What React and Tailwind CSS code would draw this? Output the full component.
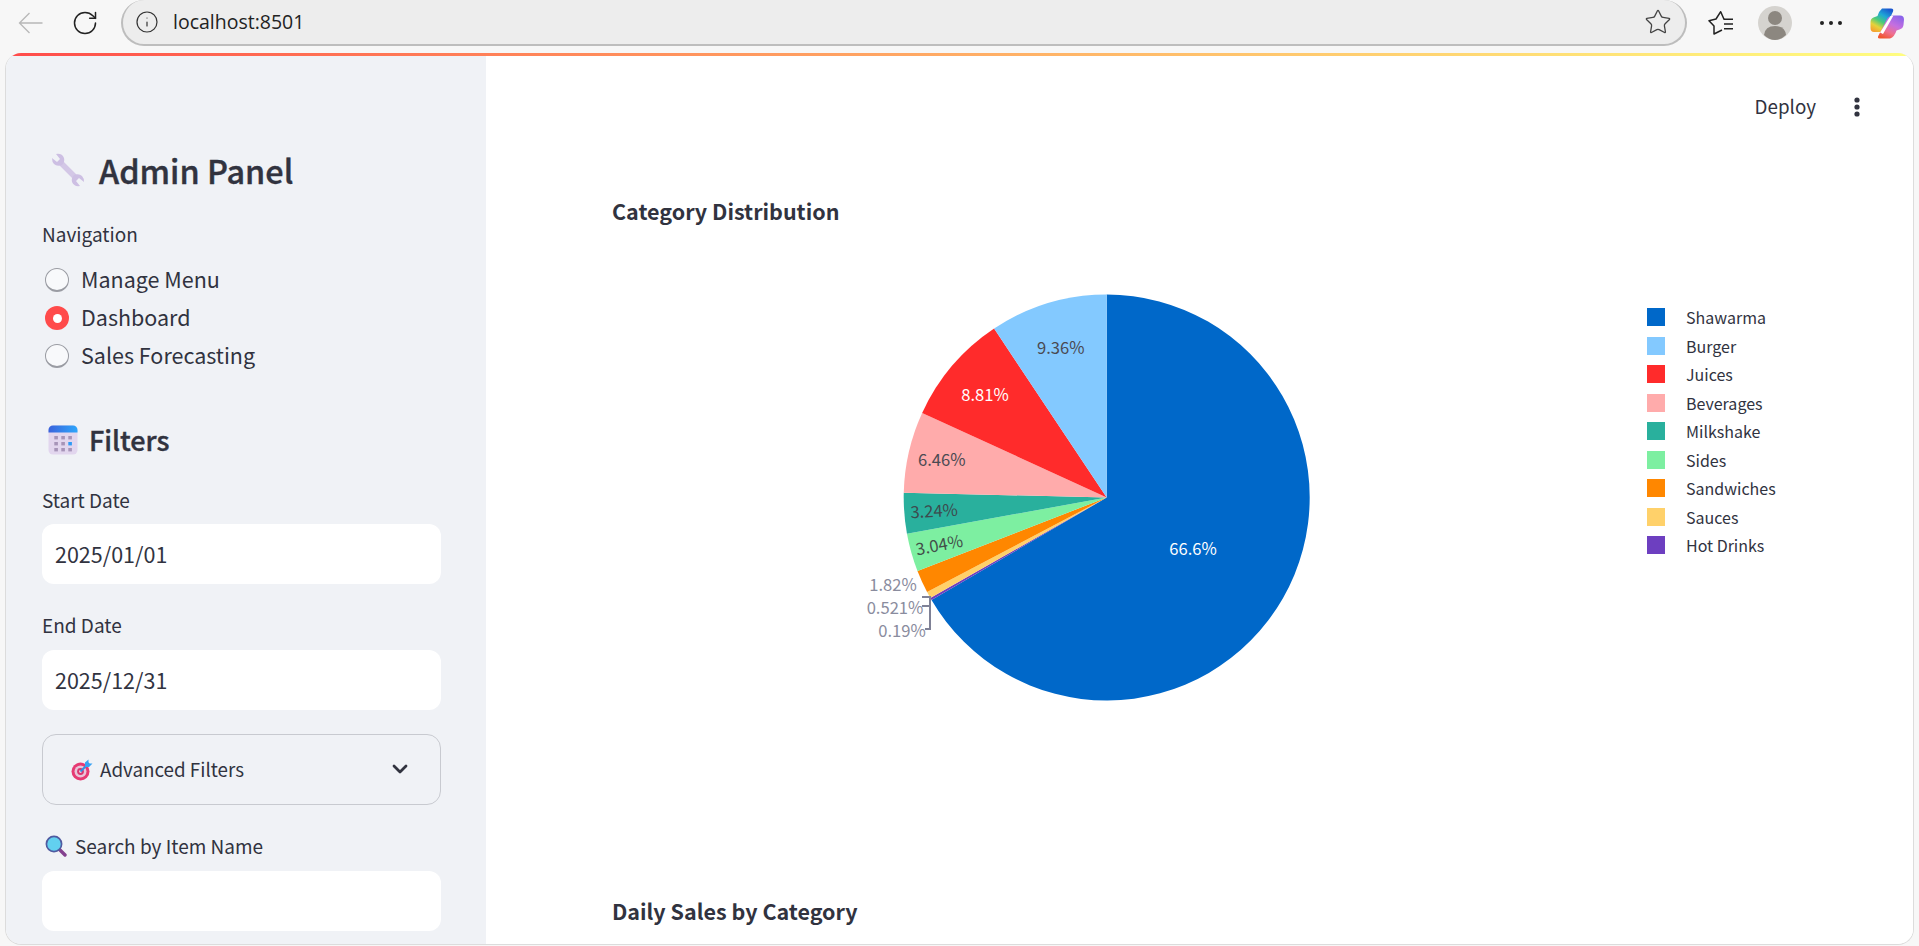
import React from "react";
import { RotateCw, Info, Star, ChevronDown } from "lucide-react";

const cx = 494.7, cy = 260.5, r = 203;
const slices = [
  [66.6, "#0068c9"], [0.19, "#6d3fc0"], [0.521, "#ffd16a"], [1.82, "#ff8700"], [3.04, "#7defa1"],
  [3.24, "#29b09d"], [6.46, "#ffabab"], [8.81, "#ff2b2b"], [9.36, "#83c9ff"],
];
const legend = [
  ["Shawarma", "#0068c9"], ["Burger", "#83c9ff"], ["Juices", "#ff2b2b"], ["Beverages", "#ffabab"], ["Milkshake", "#29b09d"],
  ["Sides", "#7defa1"], ["Sandwiches", "#ff8700"], ["Sauces", "#ffd16a"], ["Hot Drinks", "#6d3fc0"],
];
function slicePaths() {
  let a = 0;
  const total = slices.reduce((s, x) => s + x[0], 0);
  return slices.map(([v, c]) => {
    const a0 = a, a1 = a + (v / total) * Math.PI * 2;
    a = a1;
    const x0 = cx + r * Math.sin(a0), y0 = cy - r * Math.cos(a0);
    const x1 = cx + r * Math.sin(a1), y1 = cy - r * Math.cos(a1);
    return <path key={c} d={`M${cx} ${cy}L${x0} ${y0}A${r} ${r} 0 ${a1 - a0 > Math.PI ? 1 : 0} 1 ${x1} ${y1}Z`} fill={c} />;
  });
}
const ox = 612, oy = 237;
const labels = [
  ["66.6%", 1193, 548, "#ffffff", 0], ["9.36%", 1060.7, 347, "#4a4a52", 0], ["8.81%", 985, 394, "#ffffff", 0],
  ["6.46%", 941.7, 459, "#4a4a52", 0], ["3.24%", 934, 510, "#3d4a4e", -3], ["3.04%", 939, 544, "#43504a", -11],
  ["1.82%", 893, 584, "#8a8c9e", 0], ["0.521%", 895, 607, "#8a8c9e", 0], ["0.19%", 902, 630, "#8a8c9e", 0],
];

function Wrench() {
  return (
    <svg width="34" height="34" viewBox="0 0 34 34" className="shrink-0">
      <path d="M9 9 L26 26" stroke="#d3c7e6" strokeWidth="5.5" />
      <path d="M1 5 L6 9 L9 6 L5 1 Q11 0 13 5 Q14 9 11 12 Q6 14 3 11 Q1 9 1 5Z" fill="#cdbfe3" />
      <path d="M33 29 L28 25 L25 28 L29 33 Q23 34 21 29 Q20 25 23 22 Q28 20 31 23 Q33 25 33 29Z" fill="#cdbfe3" />
    </svg>
  );
}
function Calendar() {
  const dots = [];
  for (let row = 0; row < 3; row++) for (let col = 0; col < 3; col++)
    dots.push(<rect key={row + "-" + col} x={6.3 + col * 7} y={11 + row * 6} width="3.6" height="3.4" fill={row === 1 && col === 2 ? "#2f9bf5" : "#a795b8"} />);
  return (
    <svg width="30" height="30" viewBox="0 0 30 30" className="shrink-0">
      <defs>
        <linearGradient id="calTop" x1="0" x2="1" y1="0" y2="0"><stop offset="0" stopColor="#3a63dc" /><stop offset="1" stopColor="#2ea6fb" /></linearGradient>
      </defs>
      <rect x="0.5" y="0.5" width="29" height="29" rx="4.5" fill="#e2d6ee" />
      <path d="M0.5 7.5V5a4.5 4.5 0 0 1 4.5-4.5h20a4.5 4.5 0 0 1 4.5 4.5v2.5Z" fill="url(#calTop)" />
      {dots}
    </svg>
  );
}
function Target() {
  return (
    <svg width="22" height="22" viewBox="0 0 22 22" className="shrink-0">
      <circle cx="9.5" cy="12.5" r="9" fill="#e63a73" />
      <circle cx="9.5" cy="12.5" r="6" fill="#e9c4d8" />
      <circle cx="9.5" cy="12.5" r="3.4" fill="#d9366f" />
      <circle cx="9.5" cy="12.5" r="1.4" fill="#eecfe0" />
      <path d="M9.5 12.5 L18 4" stroke="#2f8fe6" strokeWidth="2" />
      <path d="M14 3.5 L17.5 0.5 L17.5 4.5 L21.5 4.5 L18 8 L14 8Z" fill="#37a2f4" />
    </svg>
  );
}
function Magnifier() {
  return (
    <svg width="22" height="22" viewBox="0 0 22 22" className="shrink-0">
      <path d="M14 14 L20 20" stroke="#84418f" strokeWidth="3.4" strokeLinecap="round" />
      <circle cx="9" cy="9" r="7.6" fill="#62d0ef" stroke="#4f5aa0" strokeWidth="1.7" />
    </svg>
  );
}
function Radio({ label, on }) {
  return (
    <div className="flex h-[38px] items-center">
      {on ? (
        <span className="ml-[3px] flex h-6 w-6 items-center justify-center rounded-full bg-[#ff4b4b]">
          <span className="h-[9px] w-[9px] rounded-full bg-white" />
        </span>
      ) : (
        <span className="ml-[3px] h-6 w-6 rounded-full border border-[#9a9ca3] border-b-2 bg-[#f8f9fb]" />
      )}
      <span className="ml-[12px] pb-[2px] text-[21.5px] leading-[34px] text-[#31333f]">{label}</span>
    </div>
  );
}
function Copilot() {
  return (
    <svg width="34" height="31" viewBox="0 0 34 31" className="shrink-0">
      <defs>
        <linearGradient id="cpL" x1="0.75" x2="0.2" y1="0" y2="1">
          <stop offset="0" stopColor="#1a56cf" /><stop offset="0.3" stopColor="#1fa6d6" /><stop offset="0.55" stopColor="#4ccb7a" /><stop offset="0.78" stopColor="#e6d23a" /><stop offset="1" stopColor="#f5a030" />
        </linearGradient>
        <linearGradient id="cpR" x1="0.8" x2="0.25" y1="0" y2="1">
          <stop offset="0" stopColor="#8a63ea" /><stop offset="0.4" stopColor="#c56fe0" /><stop offset="0.72" stopColor="#f0708f" /><stop offset="1" stopColor="#f0552f" />
        </linearGradient>
      </defs>
      <path d="M12 0.5 H21 Q24 0.5 23 3.5 L15 21 Q13.5 24 10 24 H4 Q0.5 24 0.5 20 L0.5 14 Q0.5 10.5 3.5 9.5 L7.5 8 Q9 3 12 0.5Z" fill="url(#cpL)" />
      <path d="M23 7.5 H30 Q34 7.5 34 11.5 L33.5 17 Q33 20.5 29.5 21.5 L26.5 22.5 Q24.5 29 20 30.5 H9.5 Q7 30.5 8.5 27.5 L17 11 Q19 7.5 23 7.5Z" fill="url(#cpR)" />
      <path d="M20.5 8 L23.5 7.5 L13 26 L10 24.5Z" fill="#ffffff" />
    </svg>
  );
}

export default function App() {
  const side = "font-['Noto_Sans_CJK_SC','Noto_Sans',sans-serif]";
  return (
    <div className={`flex h-screen w-full flex-col overflow-hidden bg-[#f7f7f7] ${side}`}>
      <div className="flex h-[53px] shrink-0 items-start">
        <div className="flex h-[46px] items-center pl-[18px]">
          <svg width="25" height="22" viewBox="0 0 25 22" fill="none" stroke="#b8b8b8" strokeWidth="1.3">
            <path d="M24.5 11H1.5M11.5 1L1.5 11L11.5 21" />
          </svg>
          <RotateCw size={28} strokeWidth={1.3} color="#222" className="ml-[28px]" />
        </div>
        <div className="ml-[22px] flex h-[46px] w-[1566px] items-center rounded-[23px] border-2 border-t-0 border-[#bdbdbd] bg-[#ededed] pl-[12px]">
          <Info size={24} strokeWidth={1.2} color="#333" />
          <span className="ml-[14px] font-['Open_Sans',sans-serif] text-[19.5px] leading-[26px] text-[#222]">localhost:8501</span>
          <Star size={28} strokeWidth={1.1} color="#444" className="ml-auto mr-[13px]" />
        </div>
        <div className="flex h-[46px] items-center">
          <svg width="26" height="26" viewBox="0 0 26 26" className="ml-[21px]" fill="none" stroke="#222" strokeWidth="1.5">
            <path d="M16 9.3 L12.7 1.7 L8 9 L1 10.7 L6 16 L6 24 L14 20" strokeLinejoin="round" />
            <path d="M15.5 9.3H25M16 14H25M16 18.7H25" />
          </svg>
          <svg width="34" height="34" viewBox="0 0 34 34" className="ml-[24px]">
            <circle cx="17" cy="17" r="17" fill="#d5d3cf" />
            <circle cx="17" cy="12" r="7" fill="#8c8780" />
            <path d="M6 29 Q7 20 17 20 Q27 20 28 29 Q23 34 17 34 Q11 34 6 29Z" fill="#8c8780" />
          </svg>
          <div className="ml-[28px] flex gap-[5px]">
            <span className="h-[4px] w-[4px] rounded-full bg-[#222]" />
            <span className="h-[4px] w-[4px] rounded-full bg-[#222]" />
            <span className="h-[4px] w-[4px] rounded-full bg-[#222]" />
          </div>
          <span className="ml-[28px]"><Copilot /></span>
        </div>
      </div>

      <div className="ml-[5px] mr-[5px] mb-[1px] flex flex-1 flex-col overflow-hidden rounded-[16px] border border-t-0 border-[#dcdcdc] bg-white">
        <div className="h-[3px] shrink-0 bg-gradient-to-r from-[#ff4b4b] to-[#fffd80]" />
        <div className="flex flex-1 overflow-hidden">
          <aside className="w-[480px] shrink-0 bg-[#f0f2f6] pl-[36px] pt-[94px]">
            <div className="w-[399px]">
              <div className="flex h-10 items-center pl-[9px]">
                <Wrench />
                <h1 className="ml-[14px] text-[32.4px] font-medium leading-10 text-[#31333f] [-webkit-text-stroke:0.4px_#31333f]">Admin Panel</h1>
              </div>
              <div className="mt-[32px] text-[19px] leading-6 text-[#31333f]">Navigation</div>
              <div className="mt-[15px]">
                <Radio label="Manage Menu" />
                <Radio label="Dashboard" on />
                <Radio label="Sales Forecasting" />
              </div>
              <div className="mt-[45px] flex h-10 items-center pl-[6px]">
                <Calendar />
                <h2 className="ml-[11px] text-[27px] font-medium leading-10 text-[#31333f] [-webkit-text-stroke:0.4px_#31333f]">Filters</h2>
              </div>
              <div className="mt-[28px] text-[19px] leading-6 text-[#31333f]">Start Date</div>
              <div className="mt-[12px] flex h-[60px] items-center rounded-[12px] bg-white pl-[13px] text-[21.5px] text-[#31333f]">2025/01/01</div>
              <div className="mt-[29px] text-[19px] leading-6 text-[#31333f]">End Date</div>
              <div className="mt-[13px] flex h-[60px] items-center rounded-[12px] bg-white pl-[13px] text-[21.5px] text-[#31333f]">2025/12/31</div>
              <div className="mt-[24px] flex h-[71px] items-center rounded-[14px] border border-[#c8cad0] pl-[28px] pr-[28px]">
                <Target />
                <span className="ml-[7px] pb-[2px] text-[18.8px] leading-6 text-[#31333f]">Advanced Filters</span>
                <ChevronDown size={24} strokeWidth={2.8} color="#31333f" className="ml-auto -mt-[1px]" />
              </div>
              <div className="mt-[29px] flex h-6 items-center pl-[3px]">
                <Magnifier />
                <span className="ml-[8px] text-[19px] leading-6 text-[#31333f]">Search by Item Name</span>
              </div>
              <div className="mt-[13px] h-[60px] rounded-[12px] bg-white" />
            </div>
          </aside>

          <main className="min-w-0 flex-1 bg-white pl-[126px] pt-[39px]">
            <div className="flex h-6 items-center justify-end pr-[52px]">
              <span className="pb-[2px] text-[18.8px] leading-[22px] text-[#31333f]">Deploy</span>
              <svg width="8" height="22" viewBox="0 0 8 22" className="ml-[37px]" fill="#31333f">
                <circle cx="4" cy="4" r="2.6" /><circle cx="4" cy="11" r="2.6" /><circle cx="4" cy="18" r="2.6" />
              </svg>
            </div>
            <h3 className="mt-[78px] text-[21.5px] font-bold leading-7 text-[#31333f]">Category Distribution</h3>
            <div className="mt-[12px] flex h-[520px] items-start">
              <svg width="1000" height="520" viewBox="0 0 1000 520" className="shrink-0">
                {slicePaths()}
                <path d="M310 360H318V392H313M318 369H310" fill="none" stroke="#7f8196" strokeWidth="2" />
                {labels.map(([t, x, y, c, rot]) => (
                  <text key={t} x={x - ox} y={y - oy} fill={c} fontSize="16.6" textAnchor="middle" dominantBaseline="central"
                    transform={rot ? `rotate(${rot} ${x - ox} ${y - oy})` : undefined}>{t}</text>
                ))}
              </svg>
              <div className="ml-[35px] mt-[66px]">
                {legend.map(([n, c]) => (
                  <div key={n} className="flex h-[28.5px] items-center">
                    <span className="h-[18px] w-[18px]" style={{ background: c }} />
                    <span className="ml-[21px] text-[16px] leading-[28px] text-[#31333f]">{n}</span>
                  </div>
                ))}
              </div>
            </div>
            <h3 className="mt-[140px] text-[21.5px] font-bold leading-7 text-[#31333f]">Daily Sales by Category</h3>
          </main>
        </div>
      </div>
    </div>
  );
}
